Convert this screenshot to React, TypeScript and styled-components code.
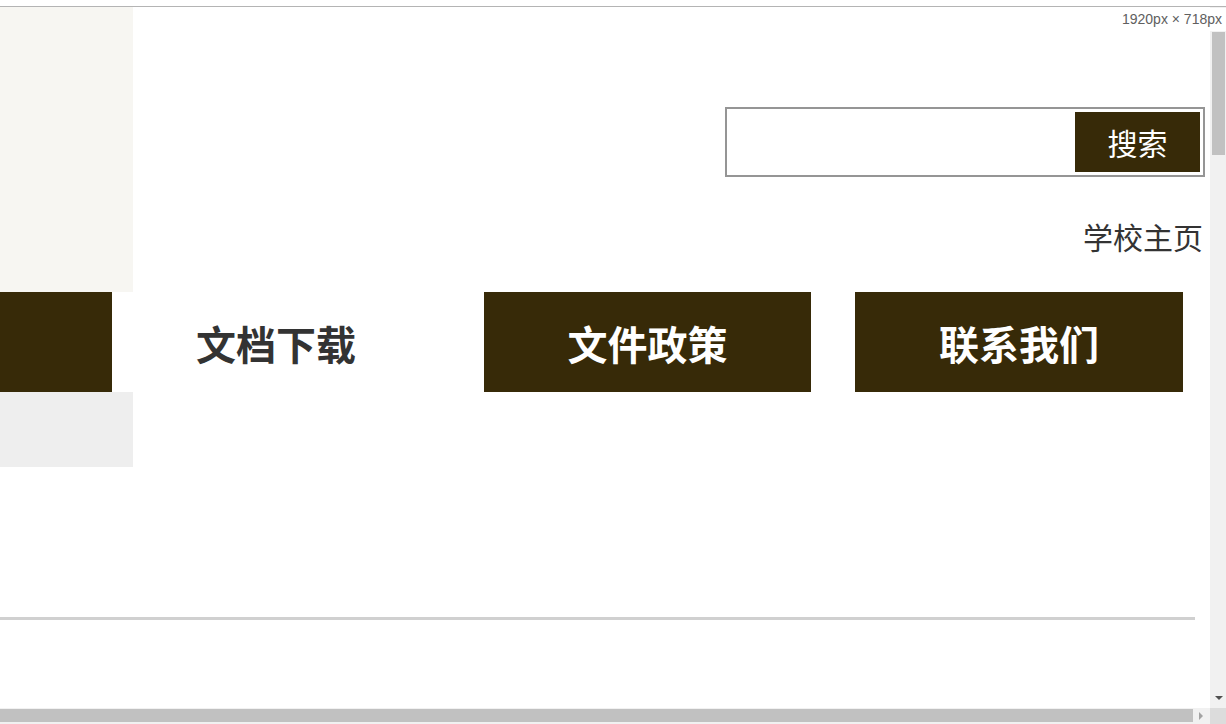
import React from "react";
import styled, { createGlobalStyle } from "styled-components";

const DARK = "#372a08";
const CJK = `"Noto Sans CJK SC", "Noto Sans", sans-serif`;

const Global = createGlobalStyle`
  html, body {
    margin: 0;
    padding: 0;
    width: 1226px;
    height: 724px;
    overflow: hidden;
    background: #fff;
  }
  * { box-sizing: border-box; }
`;

const Frame = styled.div`
  position: relative;
  width: 1226px;
  height: 724px;
  display: flex;
  flex-direction: column;
  background: #fff;
`;

const TopEdge = styled.div`
  height: 7px;
  flex: none;
  border-bottom: 1px solid #b4b4b4;
`;

const Middle = styled.div`
  display: flex;
  height: 701px;
  flex: none;
`;

const Viewport = styled.div`
  width: 1210px;
  height: 701px;
  overflow: hidden;
  display: flex;
  flex-direction: column;
`;

const VScroll = styled.div`
  width: 16px;
  flex: none;
  background: #f1f1f1;
  display: flex;
  flex-direction: column;
  align-items: center;
  padding-top: 25px;
`;

const VThumb = styled.div`
  width: 13px;
  height: 123px;
  margin-left: 1px;
  background: #c1c1c1;
`;

const ArrowDown = styled.div`
  margin-top: auto;
  margin-bottom: 8px;
  margin-left: 1px;
  width: 0;
  height: 0;
  border-left: 4px solid transparent;
  border-right: 4px solid transparent;
  border-top: 4px solid #505050;
`;

const HScroll = styled.div`
  display: flex;
  height: 16px;
  flex: none;
`;

const HTrack = styled.div`
  width: 1210px;
  background: #f1f1f1;
  display: flex;
  align-items: center;
  padding-bottom: 1px;
`;

const HThumb = styled.div`
  width: 1193px;
  height: 13px;
  background: #c1c1c1;
`;

const ArrowRight = styled.div`
  margin-left: 6px;
  width: 0;
  height: 0;
  border-top: 4px solid transparent;
  border-bottom: 4px solid transparent;
  border-left: 4px solid #a3a3a3;
`;

const Corner = styled.div`
  width: 16px;
  background: #dcdcdc;
`;

const SizeLabel = styled.div`
  position: absolute;
  top: 8px;
  right: 0;
  height: 23px;
  padding: 0 4px 0 6px;
  background: #fff;
  font-family: "Liberation Sans", Arial, sans-serif;
  font-size: 14px;
  line-height: 23px;
  color: #606060;
`;

const HeaderRow = styled.div<{ $h: number }>`
  display: flex;
  height: ${(p) => p.$h}px;
  flex: none;
`;

const SidePanel = styled.div<{ $bg: string; $w: number }>`
  width: ${(p) => p.$w}px;
  flex: none;
  background: ${(p) => p.$bg};
`;

const HeaderRight = styled.div`
  flex: 1;
  display: flex;
  flex-direction: column;
  align-items: flex-end;
  padding: 100px 5px 0 0;
`;

const SearchBox = styled.form`
  width: 480px;
  height: 70px;
  border: 2px solid #959595;
  padding: 3px;
  display: flex;
  margin: 0;
`;

const SearchInput = styled.input`
  flex: 1;
  border: none;
  outline: none;
  background: transparent;
  min-width: 0;
`;

const SearchButton = styled.button`
  width: 125px;
  height: 60px;
  border: none;
  background: ${DARK};
  color: #fff;
  font-family: ${CJK};
  font-size: 30px;
  line-height: 58px;
  padding: 0;
  cursor: pointer;
`;

const HomeLink = styled.a`
  margin: 39px 2px 0 0;
  font-family: ${CJK};
  font-size: 30px;
  line-height: 40px;
  color: #333;
  text-decoration: none;
`;

const NavRow = styled.div`
  display: flex;
  height: 100px;
  flex: none;
  gap: 44px;
`;

const NavStart = styled.div`
  display: flex;
`;

const NavItem = styled.a<{ $active?: boolean; $w: number }>`
  width: ${(p) => p.$w}px;
  height: 100px;
  flex: none;
  display: flex;
  align-items: center;
  justify-content: center;
  background: ${(p) => (p.$active ? "#fff" : DARK)};
  color: ${(p) => (p.$active ? "#333" : "#fff")};
  font-family: ${CJK};
  font-weight: 700;
  font-size: 40px;
  line-height: 100px;
  padding-top: 1px;
  text-decoration: none;
`;

const Spacer = styled.div<{ $h: number }>`
  height: ${(p) => p.$h}px;
  flex: none;
`;

const Rule = styled.div`
  width: 1195px;
  height: 3px;
  flex: none;
  background: #d0d0d0;
`;

export default function App() {
  return (
    <>
      <Global />
      <Frame>
        <TopEdge />
        <Middle>
          <Viewport>
            <HeaderRow $h={285}>
              <SidePanel $bg="#f7f6f2" $w={133} />
              <HeaderRight>
                <SearchBox onSubmit={(e) => e.preventDefault()}>
                  <SearchInput type="text" />
                  <SearchButton type="submit">搜索</SearchButton>
                </SearchBox>
                <HomeLink href="#">学校主页</HomeLink>
              </HeaderRight>
            </HeaderRow>
            <NavRow>
              <NavStart>
                <SidePanel $bg={DARK} $w={112} />
                <NavItem href="#" $active $w={328}>
                  文档下载
                </NavItem>
              </NavStart>
              <NavItem href="#" $w={327}>
                文件政策
              </NavItem>
              <NavItem href="#" $w={328}>
                联系我们
              </NavItem>
            </NavRow>
            <HeaderRow $h={75}>
              <SidePanel $bg="#eeeeee" $w={133} />
            </HeaderRow>
            <Spacer $h={150} />
            <Rule />
          </Viewport>
          <VScroll>
            <VThumb />
            <ArrowDown />
          </VScroll>
        </Middle>
        <HScroll>
          <HTrack>
            <HThumb />
            <ArrowRight />
          </HTrack>
          <Corner />
        </HScroll>
        <SizeLabel>1920px × 718px</SizeLabel>
      </Frame>
    </>
  );
}
